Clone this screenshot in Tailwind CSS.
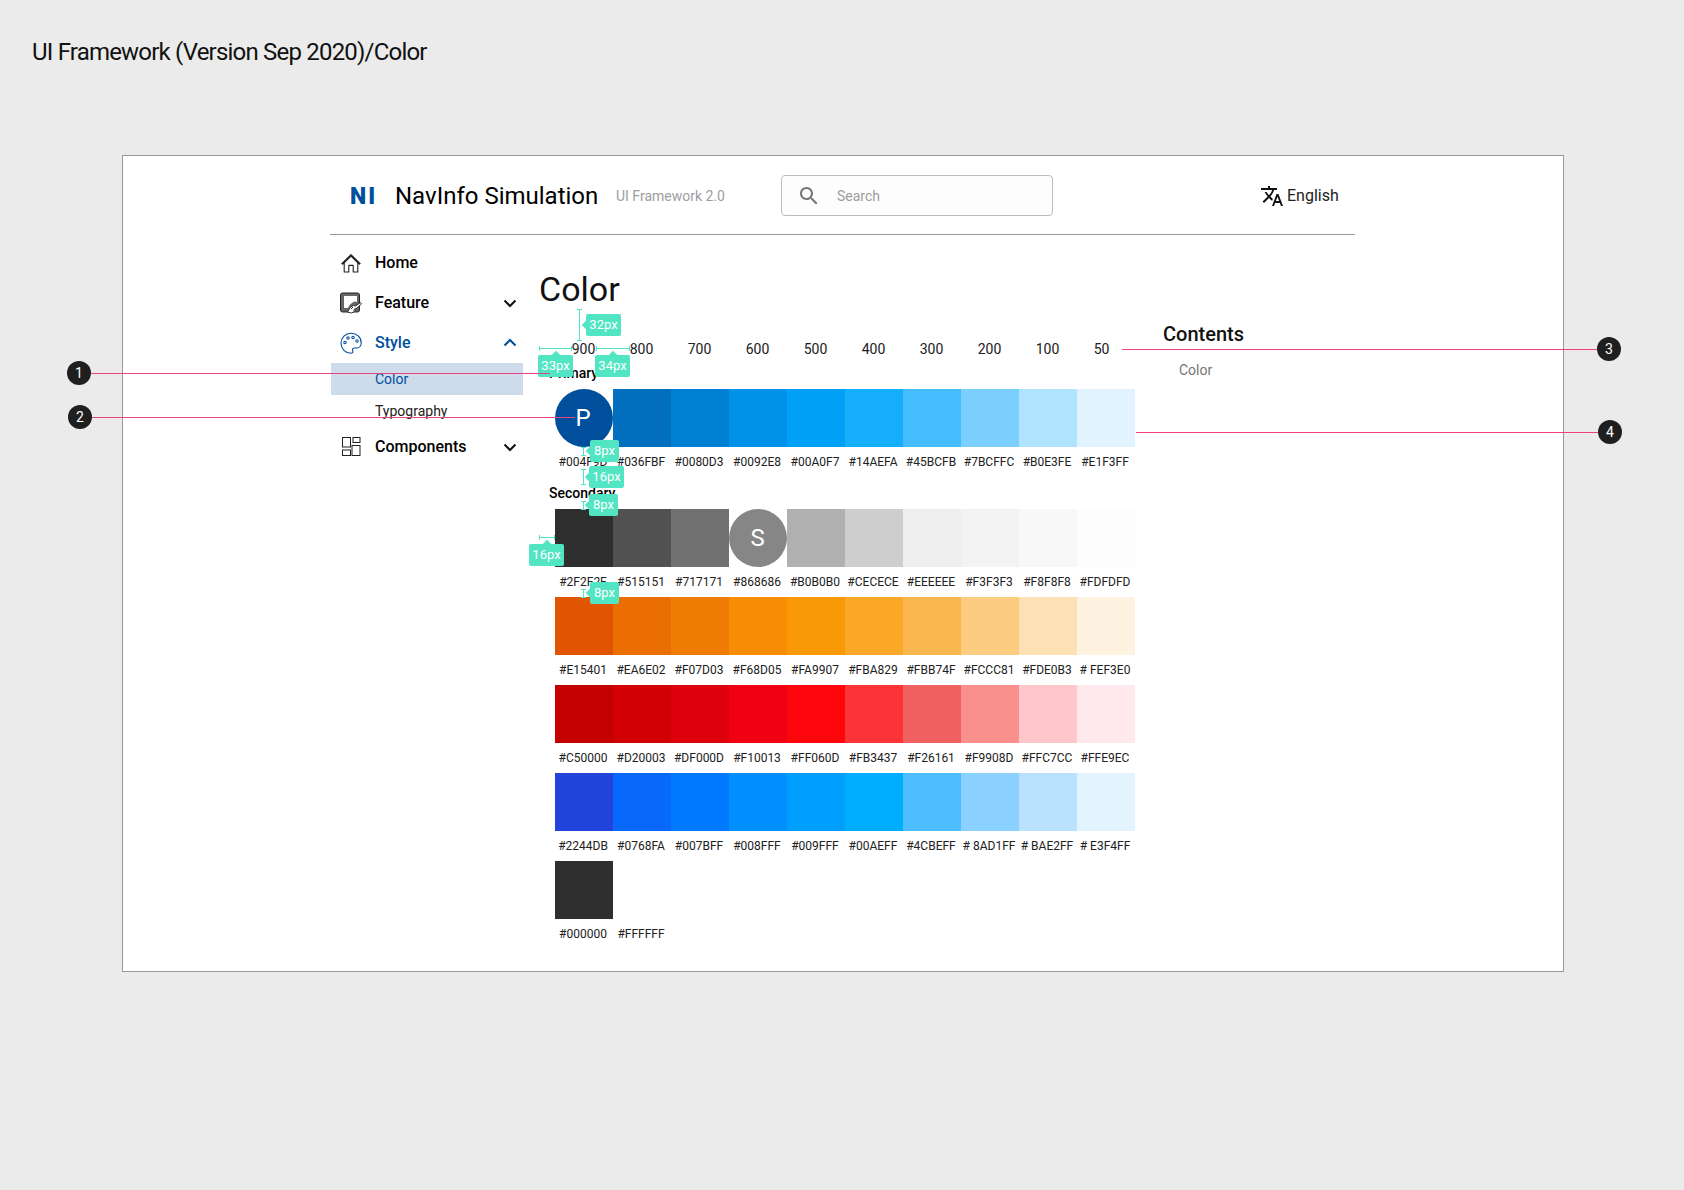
<!DOCTYPE html>
<html>
<head>
  <title>UI Framework - Color</title>
  <script src="https://cdn.jsdelivr.net/npm/@tailwindcss/browser@4"></script>
</head>
<body class="relative h-[1190px] w-[1684px] overflow-hidden bg-[#ebebeb] font-['Roboto',sans-serif] text-black">

  <!-- Page title -->
  <h1 class="pl-[32px] pt-[36px] h-[155px] text-[24px] leading-[32px] tracking-[-0.8px] text-[#111]">UI Framework (Version Sep 2020)/Color</h1>

  <!-- Frame -->
  <div class="ml-[122px] w-[1442px] h-[817px] bg-white border border-[#999] pl-[207px]">
    <div class="w-[1025px]">

      <!-- Header -->
      <header class="flex items-center h-[79px] border-b border-[#999] pl-[20px]">
        <span class="mt-[2px] w-[45px] text-[23px] leading-none font-black text-[#004F9D] tracking-[2px]">NI</span>
        <span class="mt-[2px] w-[221px] text-[24px] leading-[32px]">NavInfo Simulation</span>
        <span class="mt-[2px] w-[165px] text-[14px] text-[#9e9e9e]">UI Framework 2.0</span>
        <div class="flex items-center w-[272px] h-[41px] border-[1.5px] border-[#bdbdbd] rounded-[4px] bg-[#fdfdfd] pl-[15px] pt-[2px]">
          <svg class="w-[24px] h-[24px] text-[#757575]" viewBox="0 0 24 24" fill="currentColor"><path d="M15.5 14h-.79l-.28-.27C15.41 12.59 16 11.11 16 9.5 16 5.91 13.09 3 9.5 3S3 5.91 3 9.5 5.91 16 9.5 16c1.61 0 3.09-.59 4.23-1.57l.27.28v.79l5 4.99L20.49 19l-4.99-5zm-6 0C7.01 14 5 11.99 5 9.5S7.01 5 9.5 5 14 7.01 14 9.5 11.99 14 9.5 14z"/></svg>
          <span class="ml-[16px] text-[14px] text-[#9e9e9e]">Search</span>
        </div>
        <div class="mt-[2px] flex items-center ml-[207px]">
          <svg class="w-[24px] h-[24px]" viewBox="0 0 24 24" fill="#111"><path d="M12.87 15.07l-2.54-2.51.03-.03c1.74-1.94 2.98-4.17 3.71-6.53H17V4h-7V2H8v2H1v1.99h11.17C11.5 7.92 10.44 9.75 9 11.35 8.07 10.32 7.3 9.19 6.69 8h-2c.73 1.63 1.73 3.17 2.98 4.56l-5.09 5.02L4 19l5-5 3.11 3.11.76-2.04zM18.5 10h-2L12 22h2l1.12-3h4.75L21 22h2l-4.5-12zm-2.62 7l1.62-4.33L19.12 17h-3.24z"/></svg>
          <span class="ml-[3px] text-[16px] text-[#212121]">English</span>
        </div>
      </header>

      <div class="flex">
        <!-- Sidebar -->
        <nav class="w-[210px] pt-[8px] pl-[1px]">
          <div class="w-[192px]">
            <a class="flex items-center h-[40px] pl-[8px] text-[16px] font-medium">
              <svg class="w-[24px] h-[24px]" viewBox="0 0 24 24" fill="none" stroke="#212121" stroke-width="1.1" stroke-linejoin="round"><path d="M2.8 12.6 12 3.6l9.2 9-1 .6L12 5.2 3.8 13.2z"/><path d="M5.2 11.8V21h4.6v-6.6h4.4V21h4.6v-9.2"/></svg>
              <span class="ml-[12px]">Home</span>
            </a>
            <a class="flex items-center h-[40px] pl-[8px] text-[16px] font-medium">
              <svg class="w-[24px] h-[24px]" viewBox="0 0 24 24">
                <rect x="1.5" y="2" width="19" height="19" rx="2" fill="#666" stroke="#222" stroke-width="1"/>
                <path d="M5 5h13v6l-3-.5-4 3-2 3.500H5z" fill="#fff"/>
                <path d="M8.500 21l3-5 3-1.500 2 .5 5-3.500 1 1.500-4.500 4-1.500 1-1 2.500-3 1.500z" fill="#fff" stroke="#222" stroke-width=".9" stroke-linejoin="round"/>
                <path d="M12 18l2-2M14.500 19.500l2-2.500" stroke="#222" stroke-width=".9"/>
              </svg>
              <span class="ml-[12px] w-[123px]">Feature</span>
              <svg class="w-[24px] h-[24px]" viewBox="0 0 24 24" fill="none" stroke="#111" stroke-width="2"><path d="M6.500 9.500 12 15l5.500-5.500"/></svg>
            </a>
            <a class="flex items-center h-[40px] pl-[8px] text-[16px] font-medium text-[#004F9D]">
              <svg class="w-[24px] h-[24px]" viewBox="0 0 24 24" fill="none" stroke="#004F9D" stroke-width="1.100"><path d="M12 2.200a10 10 0 0 0 0 20c1.700 0 2.400-1.100 1.800-2.200-.8-1.400-.2-3 1.700-3h2.300c2.700 0 4.400-2.300 4.400-5 0-5.800-4.700-9.800-10.200-9.800z"/><circle cx="6" cy="11.500" r="1.200"/><circle cx="9" cy="7" r="1.200"/><circle cx="14" cy="6.500" r="1.200"/><circle cx="18" cy="10" r="1.200"/></svg>
              <span class="ml-[12px] w-[123px]">Style</span>
              <svg class="w-[24px] h-[24px]" viewBox="0 0 24 24" fill="none" stroke="#004F9D" stroke-width="2"><path d="M6.500 14.500 12 9l5.500 5.500"/></svg>
            </a>
            <div class="flex items-center h-[32px] pl-[44px] bg-[#cddbeb] text-[14px] text-[#004F9D]">Color</div>
            <div class="flex items-center h-[32px] pl-[44px] text-[14px] text-[#212121]">Typography</div>
            <a class="flex items-center h-[40px] pl-[8px] text-[16px] font-medium">
              <svg class="w-[24px] h-[24px]" viewBox="0 0 24 24" fill="none" stroke="#212121" stroke-width="1"><rect x="3.500" y="2.500" width="8" height="9.500"/><rect x="14" y="2.500" width="7" height="5"/><rect x="3.500" y="15" width="8" height="5.500"/><rect x="13" y="10.500" width="8" height="10"/></svg>
              <span class="ml-[12px] w-[123px]">Components</span>
              <svg class="w-[24px] h-[24px]" viewBox="0 0 24 24" fill="none" stroke="#111" stroke-width="2"><path d="M6.500 9.500 12 15l5.500-5.500"/></svg>
            </a>
          </div>
        </nav>

        <!-- Main -->
        <main class="w-[623px] pt-[34px]">
          <h2 class="-ml-[1px] text-[34px] leading-[40px] text-[#111]">Color</h2>

          <div class="mt-[30px] ml-[15px] grid grid-cols-[repeat(10,58px)] h-[20px] items-center text-center text-[14px] leading-[20px] text-[#212121]">
            <span class="pr-[1px]">900</span><span class="pr-[1px]">800</span><span class="pr-[1px]">700</span><span class="pr-[1px]">600</span><span class="pr-[1px]">500</span><span class="pr-[1px]">400</span><span class="pr-[1px]">300</span><span class="pr-[1px]">200</span><span class="pr-[1px]">100</span><span class="pr-[9px]">50</span>
          </div>

          <p class="mt-[4px] ml-[9px] h-[20px] text-[14px] leading-[20px] font-medium">Primary</p>
          <div class="mt-[6px] ml-[15px] grid grid-cols-[repeat(10,58px)] grid-rows-[58px_30px] items-stretch text-center text-[12px] leading-[30px] text-[#212121] [&>span]:pr-[2px]">
            <div class="flex items-center justify-center rounded-full bg-[#004F9D] pr-[2px] text-white text-[24px]">P</div>
            <div class="bg-[#036FBF]"></div><div class="bg-[#0080D3]"></div><div class="bg-[#0092E8]"></div><div class="bg-[#00A0F7]"></div><div class="bg-[#14AEFA]"></div><div class="bg-[#45BCFB]"></div><div class="bg-[#7BCFFC]"></div><div class="bg-[#B0E3FE]"></div><div class="bg-[#E1F3FF]"></div>
            <span>#004F9D</span><span>#036FBF</span><span>#0080D3</span><span>#0092E8</span><span>#00A0F7</span><span>#14AEFA</span><span>#45BCFB</span><span>#7BCFFC</span><span>#B0E3FE</span><span>#E1F3FF</span>
          </div>

          <p class="mt-[6px] ml-[9px] h-[20px] text-[14px] leading-[20px] font-medium">Secondary</p>
          <div class="mt-[6px] ml-[15px] grid grid-cols-[repeat(10,58px)] grid-rows-[58px_30px_58px_30px_58px_30px_58px_30px_58px_30px] text-center text-[12px] leading-[30px] text-[#212121] [&>span]:pr-[2px]">
            <div class="bg-[#2F2F2F]"></div><div class="bg-[#515151]"></div><div class="bg-[#717171]"></div>
            <div class="flex items-center justify-center rounded-full bg-[#868686] pr-[1px] text-white text-[24px]">S</div>
            <div class="bg-[#B0B0B0]"></div><div class="bg-[#CECECE]"></div><div class="bg-[#EEEEEE]"></div><div class="bg-[#F3F3F3]"></div><div class="bg-[#F8F8F8]"></div><div class="bg-[#FDFDFD]"></div>
            <span>#2F2F2F</span><span>#515151</span><span>#717171</span><span>#868686</span><span>#B0B0B0</span><span>#CECECE</span><span>#EEEEEE</span><span>#F3F3F3</span><span>#F8F8F8</span><span>#FDFDFD</span>

            <div class="bg-[#E15401]"></div><div class="bg-[#EA6E02]"></div><div class="bg-[#F07D03]"></div><div class="bg-[#F68D05]"></div><div class="bg-[#FA9907]"></div><div class="bg-[#FBA829]"></div><div class="bg-[#FBB74F]"></div><div class="bg-[#FCCC81]"></div><div class="bg-[#FDE0B3]"></div><div class="bg-[#FEF3E0]"></div>
            <span>#E15401</span><span>#EA6E02</span><span>#F07D03</span><span>#F68D05</span><span>#FA9907</span><span>#FBA829</span><span>#FBB74F</span><span>#FCCC81</span><span>#FDE0B3</span><span># FEF3E0</span>

            <div class="bg-[#C50000]"></div><div class="bg-[#D20003]"></div><div class="bg-[#DF000D]"></div><div class="bg-[#F10013]"></div><div class="bg-[#FF060D]"></div><div class="bg-[#FB3437]"></div><div class="bg-[#F26161]"></div><div class="bg-[#F9908D]"></div><div class="bg-[#FFC7CC]"></div><div class="bg-[#FFE9EC]"></div>
            <span>#C50000</span><span>#D20003</span><span>#DF000D</span><span>#F10013</span><span>#FF060D</span><span>#FB3437</span><span>#F26161</span><span>#F9908D</span><span>#FFC7CC</span><span>#FFE9EC</span>

            <div class="bg-[#2244DB]"></div><div class="bg-[#0768FA]"></div><div class="bg-[#007BFF]"></div><div class="bg-[#008FFF]"></div><div class="bg-[#009FFF]"></div><div class="bg-[#00AEFF]"></div><div class="bg-[#4CBEFF]"></div><div class="bg-[#8AD1FF]"></div><div class="bg-[#BAE2FF]"></div><div class="bg-[#E3F4FF]"></div>
            <span>#2244DB</span><span>#0768FA</span><span>#007BFF</span><span>#008FFF</span><span>#009FFF</span><span>#00AEFF</span><span>#4CBEFF</span><span># 8AD1FF</span><span># BAE2FF</span><span># E3F4FF</span>

            <div class="bg-[#2F2F2F]"></div><div class="bg-white"></div><div class="col-span-8"></div>
            <span>#000000</span><span>#FFFFFF</span>
          </div>
        </main>

        <!-- Contents -->
        <aside class="pt-[85px]">
          <h3 class="text-[20px] leading-[28px] font-medium text-[#111]">Contents</h3>
          <p class="mt-[12px] ml-[16px] text-[14px] leading-[20px] text-[#757575]">Color</p>
        </aside>
      </div>
    </div>
  </div>

  <!-- Measurement markers -->
  <div class="absolute left-[577px] top-[309px] w-[5px] h-[32px] border-y border-[#52E5C3]"><div class="mx-auto w-px h-full bg-[#52E5C3]"></div></div>
  <div class="absolute left-[539px] top-[346px] w-[33px] h-[5px] border-x border-[#52E5C3]"><div class="mt-[2px] h-px bg-[#52E5C3]"></div></div>
  <div class="absolute left-[596px] top-[346px] w-[34px] h-[5px] border-x border-[#52E5C3]"><div class="mt-[2px] h-px bg-[#52E5C3]"></div></div>
  <div class="absolute left-[581px] top-[447px] w-[5px] h-[9px] border-y border-[#52E5C3]"><div class="mx-auto w-px h-full bg-[#52E5C3]"></div></div>
  <div class="absolute left-[581px] top-[469px] w-[5px] h-[16px] border-y border-[#52E5C3]"><div class="mx-auto w-px h-full bg-[#52E5C3]"></div></div>
  <div class="absolute left-[581px] top-[501px] w-[5px] h-[9px] border-y border-[#52E5C3]"><div class="mx-auto w-px h-full bg-[#52E5C3]"></div></div>
  <div class="absolute left-[539px] top-[535px] w-[16px] h-[5px] border-x border-[#52E5C3]"><div class="mt-[2px] h-px bg-[#52E5C3]"></div></div>
  <div class="absolute left-[581px] top-[589px] w-[5px] h-[9px] border-y border-[#52E5C3]"><div class="mx-auto w-px h-full bg-[#52E5C3]"></div></div>

  <!-- Measurement tags -->
  <div class="absolute left-[586px] top-[314px] w-[35px] h-[22px] rounded-[2px] bg-[#52E5C3] text-center text-[13px] leading-[22px] text-white"><i class="absolute -left-[3px] top-[8px] size-[6px] rotate-45 bg-[#52E5C3]"></i><span class="relative">32px</span></div>
  <div class="absolute left-[538px] top-[355px] w-[35px] h-[22px] rounded-[2px] bg-[#52E5C3] text-center text-[13px] leading-[22px] text-white"><i class="absolute -top-[3px] left-[15px] size-[6px] rotate-45 bg-[#52E5C3]"></i><span class="relative">33px</span></div>
  <div class="absolute left-[595px] top-[355px] w-[35px] h-[22px] rounded-[2px] bg-[#52E5C3] text-center text-[13px] leading-[22px] text-white"><i class="absolute -top-[3px] left-[15px] size-[6px] rotate-45 bg-[#52E5C3]"></i><span class="relative">34px</span></div>
  <div class="absolute left-[590px] top-[440px] w-[29px] h-[22px] rounded-[2px] bg-[#52E5C3] text-center text-[13px] leading-[22px] text-white"><i class="absolute -left-[3px] top-[8px] size-[6px] rotate-45 bg-[#52E5C3]"></i><span class="relative">8px</span></div>
  <div class="absolute left-[589px] top-[466px] w-[35px] h-[22px] rounded-[2px] bg-[#52E5C3] text-center text-[13px] leading-[22px] text-white"><i class="absolute -left-[3px] top-[8px] size-[6px] rotate-45 bg-[#52E5C3]"></i><span class="relative">16px</span></div>
  <div class="absolute left-[589px] top-[494px] w-[29px] h-[22px] rounded-[2px] bg-[#52E5C3] text-center text-[13px] leading-[22px] text-white"><i class="absolute -left-[3px] top-[8px] size-[6px] rotate-45 bg-[#52E5C3]"></i><span class="relative">8px</span></div>
  <div class="absolute left-[529px] top-[544px] w-[35px] h-[22px] rounded-[2px] bg-[#52E5C3] text-center text-[13px] leading-[22px] text-white"><i class="absolute -top-[3px] left-[15px] size-[6px] rotate-45 bg-[#52E5C3]"></i><span class="relative">16px</span></div>
  <div class="absolute left-[590px] top-[582px] w-[29px] h-[22px] rounded-[2px] bg-[#52E5C3] text-center text-[13px] leading-[22px] text-white"><i class="absolute -left-[3px] top-[8px] size-[6px] rotate-45 bg-[#52E5C3]"></i><span class="relative">8px</span></div>

  <!-- Callout lines -->
  <div class="absolute left-[90px] top-[373px] w-[460px] h-px bg-[#E8457F]"></div>
  <div class="absolute left-[91px] top-[417px] w-[484px] h-px bg-[#E8457F]"></div>
  <div class="absolute left-[1122px] top-[349px] w-[476px] h-px bg-[#F0407F]"></div>
  <div class="absolute left-[1136px] top-[432px] w-[462px] h-px bg-[#F0407F]"></div>

  <!-- Callout badges -->
  <div class="absolute left-[67px] top-[361px] flex items-center justify-center size-[24px] rounded-full bg-[#1f1f1f] text-[14px] text-white">1</div>
  <div class="absolute left-[68px] top-[405px] flex items-center justify-center size-[24px] rounded-full bg-[#1f1f1f] text-[14px] text-white">2</div>
  <div class="absolute left-[1597px] top-[337px] flex items-center justify-center size-[24px] rounded-full bg-[#1f1f1f] text-[14px] text-white">3</div>
  <div class="absolute left-[1598px] top-[420px] flex items-center justify-center size-[24px] rounded-full bg-[#1f1f1f] text-[14px] text-white">4</div>

</body>
</html>
